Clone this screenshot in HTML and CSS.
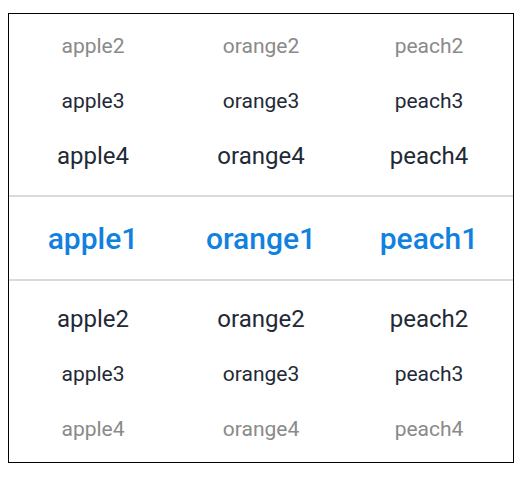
FILE: index.html
```html
<!DOCTYPE html>
<html lang="en">
<head>
    <meta charset="UTF-8">
    <meta name="viewport" content="width=device-width, initial-scale=1.0">
    <title>Text Picker</title>
    <link rel="stylesheet" href="styles.css">
</head>
<body>
    <div class="picker">
        <!-- rows above the selection -->
        <div class="row far"><span>apple2</span><span>orange2</span><span>peach2</span></div>
        <div class="row mid"><span>apple3</span><span>orange3</span><span>peach3</span></div>
        <div class="row near top-near"><span>apple4</span><span>orange4</span><span>peach4</span></div>

        <div class="row selected"><span>apple1</span><span>orange1</span><span>peach1</span></div>

        <!-- rows below the selection -->
        <div class="row near bottom-near"><span>apple2</span><span>orange2</span><span>peach2</span></div>
        <div class="row mid"><span>apple3</span><span>orange3</span><span>peach3</span></div>
        <div class="row far"><span>apple4</span><span>orange4</span><span>peach4</span></div>
    </div>
</body>
</html>
```

FILE: styles.css
```css
body {
    margin: 0;
    padding: 13px 8px 0;
    background-color: #FFFFFF;
    font-family: Roboto, "Noto Sans", sans-serif;
}
.picker {
    width: 506px;
    box-sizing: border-box;
    border: 1px solid #000000;
    padding: 4px 0 6px;
    display: flex;
    flex-direction: column;
}
.row {
    display: grid;
    grid-template-columns: repeat(3, 1fr);
    height: 55px;
    align-items: center;
    justify-items: center;
    color: #1f2a36;
    font-size: 21px;
}
.row.far {
    color: #8a8a8a;
}
.row.near {
    font-size: 24px;
}
.row.top-near {
    margin-bottom: 12px;
}
.row.bottom-near {
    margin-top: 10px;
}
.row.selected {
    height: 82px;
    border-top: 2px solid #DADADA;
    border-bottom: 2px solid #DADADA;
    color: #1181E0;
    font-size: 30px;
    font-weight: 500;
}
```
